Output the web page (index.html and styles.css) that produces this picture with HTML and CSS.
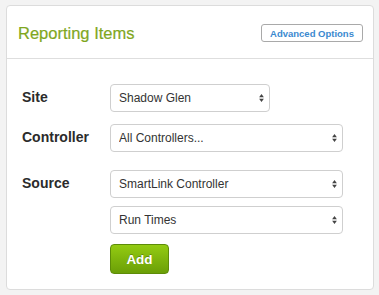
FILE: index.html
```html
<!DOCTYPE html>
<html>
	<head>
		<title>Reporting Items</title>
		<link rel="stylesheet" href="styles.css">
	</head>
	<body>
		<div class="panel">
			<div class="panel-head">
				<h2>Reporting Items</h2>
				<a class="btn-outline" href="#">Advanced Options</a>
			</div>
			<div class="panel-body">
				<div class="field field-site">
					<label>Site</label>
					<div class="controls">
						<div class="select narrow">
							<select><option>Shadow Glen</option></select>
							<svg class="caret" viewBox="0 0 6 10"><path d="M3 0L6 4H0z M0 6h6L3 10z"/></svg>
						</div>
					</div>
				</div>
				<div class="field field-controller">
					<label>Controller</label>
					<div class="controls">
						<div class="select">
							<select><option>All Controllers...</option></select>
							<svg class="caret" viewBox="0 0 6 10"><path d="M3 0L6 4H0z M0 6h6L3 10z"/></svg>
						</div>
					</div>
				</div>
				<div class="field">
					<label>Source</label>
					<div class="controls">
						<div class="select">
							<select><option>SmartLink Controller</option></select>
							<svg class="caret" viewBox="0 0 6 10"><path d="M3 0L6 4H0z M0 6h6L3 10z"/></svg>
						</div>
						<div class="select">
							<select><option>Run Times</option></select>
							<svg class="caret" viewBox="0 0 6 10"><path d="M3 0L6 4H0z M0 6h6L3 10z"/></svg>
						</div>
						<button class="btn-add">Add</button>
					</div>
				</div>
			</div>
		</div>
	</body>
</html>
```

FILE: styles.css
```css
* {
	margin: 0; padding: 0;
	box-sizing: border-box;
}

body {
	font-family: "Liberation Sans", Arial, sans-serif;
	color: #333;
	background: #f3f3f3;
	padding: 5px 5px 0 6px;
}

.panel {
	background: #fff;
	border: 1px solid #dcdcdc;
	border-radius: 4px;
	height: 285px;
}

.panel-head {
	display: flex;
	align-items: center;
	justify-content: space-between;
	height: 53px;
	padding: 2px 10px 0 11px;
	border-bottom: 1px solid #dedede;
}

.panel-head h2 {
	font-size: 16.5px;
	font-weight: normal;
	color: #7fa71e;
	-webkit-text-stroke: 0.2px #7fa71e;
}

.btn-outline {
	display: flex;
	align-items: center;
	justify-content: center;
	width: 102px; height: 18px;
	border: 1px solid #a9a9a9;
	border-radius: 3px;
	font-size: 9.5px;
	font-weight: bold;
	color: #3b89cf;
	text-decoration: none;
}

.panel-body {
	padding: 25px 30px 0 15px;
}

.field {
	display: flex;
}

.field-site { margin-bottom: 12px; }
.field-controller { margin-bottom: 18px; }

.field > label {
	width: 88px;
	line-height: 27px;
	font-size: 14px;
	font-weight: bold;
	color: #2b2b2b;
}

.controls {
	flex: 1;
	display: flex;
	flex-direction: column;
	align-items: flex-start;
	gap: 8px;
}

.select {
	position: relative;
	width: 233px;
}

.select.narrow {
	width: 160px;
}

.select select {
	appearance: none;
	-webkit-appearance: none;
	width: 100%; height: 28px;
	padding: 0 20px 0 8px;
	border: 1px solid #cfcfcf;
	border-radius: 4px;
	background: #fff;
	font-family: inherit;
	font-size: 12px;
	color: #333;
}

.caret {
	position: absolute;
	right: 6px; top: 10px;
	width: 5px; height: 8px;
	fill: #444;
	pointer-events: none;
}

.btn-add {
	margin-top: 2px;
	width: 59px; height: 30px;
	border: 1px solid #5d8c08;
	border-radius: 4px;
	background: linear-gradient(#93cb12, #6b9f07);
	color: #fff;
	font-family: inherit;
	font-size: 13.5px;
	font-weight: bold;
	text-shadow: 0 -1px 0 rgba(0,0,0,0.25);
}
```
